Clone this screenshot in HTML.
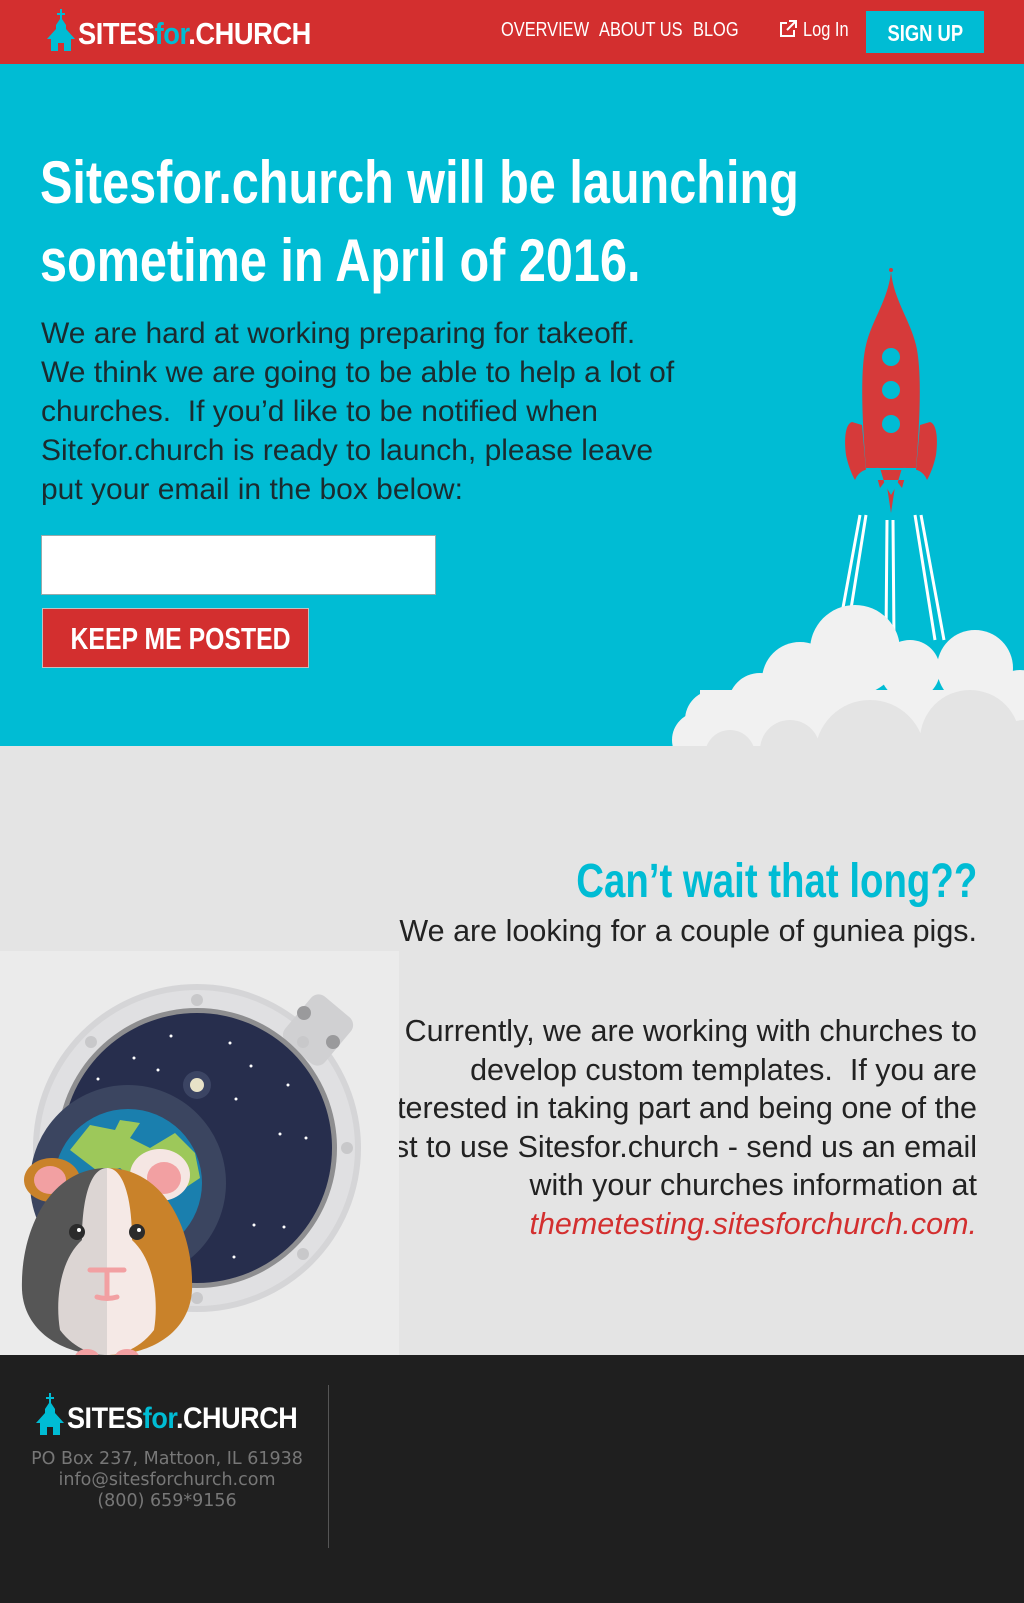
<!DOCTYPE html>
<html><head><meta charset="utf-8">
<style>
*{margin:0;padding:0;box-sizing:border-box}
body{width:1024px;height:1603px;overflow:hidden;font-family:"Liberation Sans",sans-serif;background:#1f1f1f;position:relative}
.sx{display:inline-block;transform:scaleX(0.82);transform-origin:left center;white-space:nowrap}
.cond{font-weight:bold}
nav{position:absolute;left:0;top:0;width:1024px;height:64px;background:#d32f2f}
.logo{position:absolute;display:flex;align-items:flex-end;white-space:nowrap}
.logo span.t{font-weight:bold;color:#fff;letter-spacing:-0.5px;display:inline-block;transform:scaleX(0.88);transform-origin:left bottom}
.logo .f{color:#00bcd4}
.links{position:absolute;top:19px;color:#fff;font-size:20px;white-space:nowrap}
.signup{position:absolute;left:866px;top:11px;width:118px;height:42px;background:#00bcd4;color:#fff;font-size:23px;line-height:44px;text-align:center}
.hero{position:absolute;left:0;top:64px;width:1024px;height:682px;background:#00bcd4;overflow:hidden}
h1{position:absolute;left:40px;top:80px;color:#fff;font-size:60px;line-height:78px;font-weight:bold;white-space:nowrap;transform:scaleX(0.81);transform-origin:left top}
.hp{position:absolute;left:41px;top:250px;color:#1b2b2f;font-size:30px;line-height:39px;white-space:nowrap}
.inp{position:absolute;left:41px;top:471px;width:395px;height:60px;background:#fff;border:1px solid #9aa}
.btn{position:absolute;left:42px;top:544px;width:267px;height:60px;background:#d32f2f;border:1px solid #c0c0c0;color:#fff;font-size:31px;line-height:60px;white-space:nowrap;text-align:center}
.btn span{display:inline-block;transform:scaleX(0.8)}
.gray{position:absolute;left:0;top:746px;width:1024px;height:609px;background:#e4e4e4;overflow:hidden}
.gh{position:absolute;right:47px;top:108px;color:#00bcd4;font-size:48px;font-weight:bold;white-space:nowrap;transform:scaleX(0.8);transform-origin:right top}
.gt{position:absolute;right:47px;text-align:right;color:#222;font-size:30.5px;line-height:38.6px;white-space:nowrap}
.gt i{color:#d32f2f}
.pic{position:absolute;left:0;top:205px;width:399px;height:404px;background:#ebebeb}
footer{position:absolute;left:0;top:1355px;width:1024px;height:248px;background:#1f1f1f}
.addr{position:absolute;left:0;width:334px;top:94px;text-align:center;color:#777;font-family:"DejaVu Sans",sans-serif;font-size:17.5px;line-height:21px}
.vl{position:absolute;left:328px;top:30px;width:1px;height:163px;background:#555}
</style></head><body>
<nav>
 <div class="logo" style="left:47px;top:9px">
  <svg width="28" height="42" viewBox="0 0 28 42"><path d="M13 0h2v4h3v2h-3v4l4 6v4l9 10h-4v12H4V30H0l9-10v-4l4-6V6h-3V4h3z" fill="#00bcd4"/><path d="M11 34h6v8h-6z" fill="#d32f2f"/></svg>
  <span class="t" style="font-size:31px;line-height:34px;margin-left:3px"><span>SITES</span><span class="f">for</span>.CHURCH</span>
 </div>
 <div class="links" style="left:501px"><span class="sx">OVERVIEW</span></div>
 <div class="links" style="left:599px"><span class="sx">ABOUT US</span></div>
 <div class="links" style="left:693px"><span class="sx">BLOG</span></div>
 <div class="links" style="left:779px"><svg width="18" height="18" viewBox="0 0 18 18" style="vertical-align:-2px"><path d="M8 3H2v13h13v-6" fill="none" stroke="#fff" stroke-width="2"/><path d="M10 1h7v7M17 1L8 10" fill="none" stroke="#fff" stroke-width="2"/></svg> <span class="sx">Log In</span></div>
 <div class="signup cond"><span style="display:inline-block;transform:scaleX(0.8)">SIGN UP</span></div>
</nav>
<div class="hero">
 <h1>Sitesfor.church will be launching<br>sometime in April of 2016.</h1>
 <div class="hp">We are hard at working preparing for takeoff.<br>We think we are going to be able to help a lot of<br>churches.&nbsp; If you’d like to be notified when<br>Sitefor.church is ready to launch, please leave<br>put your email in the box below:</div>
 <div class="inp"></div>
 <div class="btn cond"><span>KEEP ME POSTED</span></div>
 <svg style="position:absolute;left:0;top:0" width="1024" height="682" viewBox="0 64 1024 682">
  <g stroke="#fff" stroke-width="3" fill="none">
   <path d="M860 515L838 635M866 515L846 640M887 520L886 640M893 520L894 640M915 515L935 640M921 515L944 640"/>
  </g>
  <g fill="#d63a3a">
   <circle cx="891" cy="270" r="2"/>
   <path d="M891 272C888 300 872 320 866 345C860 370 862 420 866 468L916 468C920 420 922 370 916 345C910 320 894 300 891 272Z"/>
   <path d="M852 422C845 424 844 440 846 455C848 465 852 475 855 480L866 470L862 425Z"/>
   <path d="M930 422C937 424 938 440 936 455C934 465 930 475 927 480L916 470L920 425Z"/>
   <path d="M875 470L880 488L886 480L891 513L896 480L902 488L907 470Z"/>
  </g>
  <g fill="#00bcd4"><circle cx="891" cy="357" r="9"/><circle cx="891" cy="390" r="9"/><circle cx="891" cy="424" r="9"/>
   <path d="M855 480Q860 467 880 468L885 485L891 495L897 485L902 468Q922 467 927 480Z"/></g>
  <g fill="#f1f1f1">
   <circle cx="855" cy="650" r="45"/><circle cx="800" cy="680" r="38"/><circle cx="760" cy="705" r="32"/><circle cx="715" cy="720" r="30"/><circle cx="700" cy="740" r="28"/>
   <circle cx="910" cy="670" r="30"/><circle cx="975" cy="668" r="38"/><circle cx="1020" cy="700" r="30"/>
   <rect x="700" y="690" width="324" height="60"/>
  </g>
  <g fill="#e4e4e4">
   <circle cx="870" cy="755" r="55"/><circle cx="790" cy="750" r="30"/><circle cx="970" cy="740" r="50"/><circle cx="1024" cy="750" r="30"/><circle cx="730" cy="755" r="25"/>
  </g>
 </svg>
</div>
<div class="gray">
 <div class="gh">Can’t wait that long??</div>
 <div class="gt" style="top:166px">We are looking for a couple of guniea pigs.</div>
 <div class="gt" style="top:266px">Currently, we are working with churches to<br>develop custom templates.&nbsp; If you are<br>interested in taking part and being one of the<br>first to use Sitesfor.church - send us an email<br>with your churches information at<br><i>themetesting.sitesforchurch.com.</i></div>
 <div class="pic">
  <svg width="399" height="404" viewBox="0 951 399 404">
   <circle cx="197" cy="1148" r="164" fill="#d5d5d7"/>
   <circle cx="197" cy="1148" r="158" fill="#e0e0e2"/>
   <rect x="292" y="1000" width="52" height="60" rx="10" fill="#d0d0d2" transform="rotate(40 318 1030)"/>
   <circle cx="304" cy="1013" r="7" fill="#9a9a9c"/><circle cx="333" cy="1042" r="7" fill="#9a9a9c"/>
   <circle cx="197" cy="1148" r="140" fill="#8e8e90"/>
   <circle cx="197" cy="1148" r="135" fill="#272e4d"/>
   <g fill="#c8c8ca"><circle cx="197" cy="1000" r="6"/><circle cx="91" cy="1042" r="6"/><circle cx="303" cy="1042" r="6"/><circle cx="47" cy="1148" r="6"/><circle cx="347" cy="1148" r="6"/><circle cx="303" cy="1254" r="6"/><circle cx="197" cy="1298" r="6"/></g>
   <circle cx="197" cy="1085" r="14" fill="#3b4463"/><circle cx="197" cy="1085" r="7" fill="#e8e2c8"/>
   <circle cx="128" cy="1183" r="98" fill="#3b4560"/>
   <circle cx="128" cy="1183" r="74" fill="#1a7fae"/>
   <path d="M70 1150l20-25 25 5 5-10 20 3-10 15 20 10 25-15 20 20 5 25-15 10-30-15-15 10-20-15-20 5z" fill="#9dc85a"/>
   <g fill="#fff"><circle cx="171" cy="1036" r="1.5"/><circle cx="230" cy="1043" r="1.5"/><circle cx="134" cy="1058" r="1.5"/><circle cx="158" cy="1070" r="1.5"/><circle cx="98" cy="1079" r="1.5"/><circle cx="251" cy="1066" r="1.5"/><circle cx="288" cy="1085" r="1.5"/><circle cx="236" cy="1099" r="1.5"/><circle cx="280" cy="1134" r="1.5"/><circle cx="306" cy="1138" r="1.5"/><circle cx="254" cy="1225" r="1.5"/><circle cx="284" cy="1227" r="1.5"/><circle cx="234" cy="1257" r="1.5"/></g>
   <ellipse cx="52" cy="1180" rx="28" ry="22" fill="#c9822a"/><ellipse cx="50" cy="1180" rx="16" ry="14" fill="#f2a0a2"/>
   <ellipse cx="160" cy="1175" rx="30" ry="26" fill="#f5e6e3"/><ellipse cx="164" cy="1178" rx="17" ry="16" fill="#f2a0a2"/>
   <path d="M107 1168C50 1168 20 1230 22 1290C24 1330 60 1355 107 1355Z" fill="#565656"/>
   <path d="M107 1168C164 1168 194 1230 192 1290C190 1330 154 1355 107 1355Z" fill="#c9822a"/>
   <path d="M107 1168C90 1168 82 1200 82 1240C60 1260 55 1300 60 1330C75 1350 95 1355 107 1355Z" fill="#dcd5d3"/>
   <path d="M107 1168C124 1168 132 1200 132 1240C154 1260 159 1300 154 1330C139 1350 119 1355 107 1355Z" fill="#f5e9e6"/>
   <circle cx="77" cy="1232" r="8" fill="#2b2b2b"/><circle cx="137" cy="1232" r="8" fill="#2b2b2b"/>
   <circle cx="79" cy="1230" r="2" fill="#fff"/><circle cx="139" cy="1230" r="2" fill="#fff"/>
   <path d="M90 1270h34M107 1270v26M97 1297q10 3 20 0" stroke="#f2a0a2" stroke-width="5" fill="none" stroke-linecap="round"/>
   <ellipse cx="87" cy="1357" rx="12" ry="8" fill="#f2a0a2"/><ellipse cx="127" cy="1357" rx="12" ry="8" fill="#f2a0a2"/>
  </svg>
 </div>
</div>
<footer>
 <div class="logo" style="left:36px;top:38px">
  <svg width="28" height="42" viewBox="0 0 28 42"><path d="M13 0h2v4h3v2h-3v4l4 6v4l9 10h-4v12H4V30H0l9-10v-4l4-6V6h-3V4h3z" fill="#00bcd4"/><path d="M11 34h6v8h-6z" fill="#1f1f1f"/></svg>
  <span class="t" style="font-size:30px;line-height:33px;margin-left:3px;transform:scaleX(0.9)"><span>SITES</span><span class="f">for</span>.CHURCH</span>
 </div>
 <div class="addr">PO Box 237, Mattoon, IL 61938<br>info@sitesforchurch.com<br>(800) 659*9156</div>
 <div class="vl"></div>
</footer>
</body></html>
